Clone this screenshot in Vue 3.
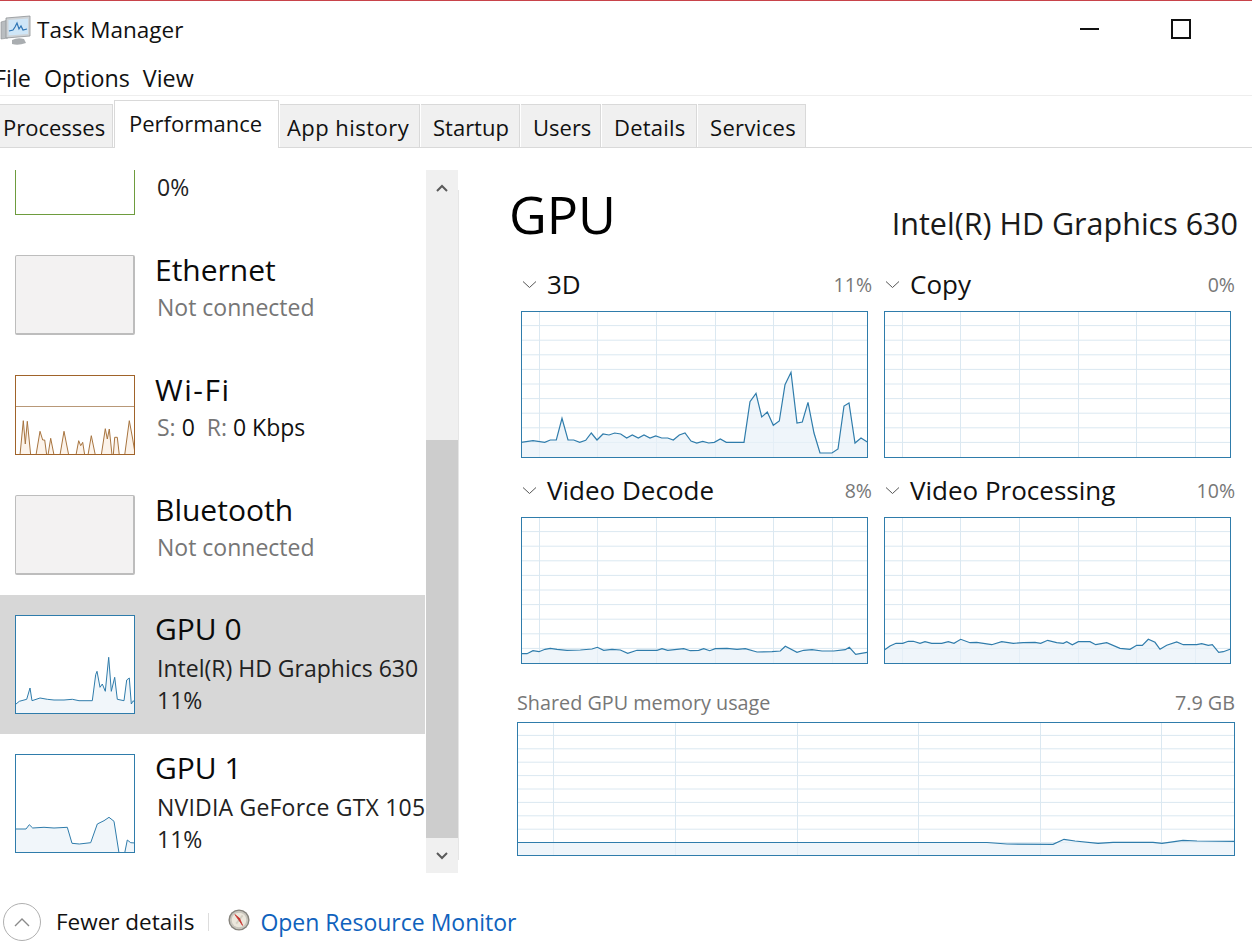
<script setup>
const L = '#2f7cab'
const conv = (pts, ox, oy) => pts.map(([x, y]) => [+((x - ox) / 3).toFixed(1), +((y - oy) / 3).toFixed(1)])
const line = p => p.map(q => q.join(',')).join(' ')
const area = (p, w, h) => `0,${h} ${line(p)} ${w},${h}`

const p3d = conv([[34,533],[70,528],[105,533],[122,526],[140,526],[157,461],[175,526],[192,526],[210,533],[228,527],[245,505],[262,526],[280,508],[298,511],[315,505],[333,508],[351,520],[368,511],[386,520],[403,511],[421,520],[438,514],[456,520],[474,520],[491,526],[509,511],[526,505],[544,529],[561,535],[579,530],[597,535],[614,533],[632,523],[650,533],[703,533],[721,411],[739,386],[756,457],[773,442],[791,482],[809,469],[826,360],[844,323],[862,475],[878,472],[895,413],[913,505],[931,565],[967,565],[985,553],[1003,424],[1018,415],[1036,535],[1054,520],[1073,532]], 34, 139)

const decode = conv([[13,71],[30,71],[48,62],[66,65],[84,58],[100,55],[120,58],[150,61],[190,60],[225,57],[241,52],[260,61],[285,58],[310,60],[332,70],[360,61],[420,61],[435,56],[452,61],[500,56],[520,62],[545,61],[560,56],[578,62],[595,56],[630,55],[660,58],[685,56],[720,66],[765,65],[790,63],[805,49],[840,67],[860,61],[885,59],[915,63],[950,63],[985,59],[997,52],[1016,73],[1050,67]], 12, -339)
const proc = conv([[13,60],[30,48],[48,40],[68,40],[85,34],[100,34],[120,40],[135,35],[155,40],[185,40],[205,35],[222,40],[242,28],[270,38],[290,37],[335,44],[365,35],[400,40],[430,38],[465,37],[482,40],[503,31],[530,38],[550,40],[560,35],[577,44],[595,35],[630,35],[647,44],[680,38],[720,55],[750,58],[770,46],[787,46],[805,28],[825,37],[840,58],[860,46],[890,36],[910,44],[950,44],[965,41],[985,46],[997,44],[1016,67],[1030,65],[1050,58]], 12, -339)
const memory = [[0,120.5],[470,120.5],[490,122],[536,122.3],[547,117.3],[558,119],[581,121.3],[596,120.3],[636,120.3],[645,121.3],[666,118.3],[680,119],[718,119.3]]

const wifi = conv([[46,283],[58,283],[68,180],[74,250],[80,182],[90,283],[106,283],[118,212],[126,238],[132,238],[138,283],[142,283],[150,233],[160,283],[178,283],[190,212],[204,283],[226,283],[234,240],[240,255],[246,245],[252,283],[262,283],[272,225],[284,283],[302,283],[314,204],[320,235],[326,205],[334,283],[338,283],[342,230],[350,230],[356,283],[372,283],[386,180],[396,235],[404,283]], 46, 46)
const gpu0 = conv([[46,310],[56,302],[78,296],[88,262],[94,300],[118,292],[140,296],[160,298],[190,298],[215,296],[235,300],[275,300],[285,222],[289,212],[298,260],[305,250],[314,272],[324,170],[332,272],[342,230],[350,296],[370,300],[378,238],[386,232],[392,310],[398,300],[404,308]], 46, 46)
const gpu1 = conv([[46,685],[76,685],[86,672],[96,682],[130,680],[160,682],[200,680],[214,728],[236,730],[270,726],[290,670],[310,660],[325,650],[340,662],[355,757],[372,757],[380,718],[390,726],[404,727]], 46, 463)

const big = [
  { cls: 'gap-a', name: '3D', value: '11%', trace: p3d },
  { cls: 'gap-a', name: 'Copy', value: '0%', trace: null },
  { cls: 'gap-b', name: 'Video Decode', value: '8%', trace: decode },
  { cls: 'gap-b', name: 'Video Processing', value: '10%', trace: proc }
]
const vLines = [18, 76, 135, 194, 252, 311]
const hLines = [14.6, 29.2, 43.8, 58.4, 73, 87.6, 102.2, 116.8, 131.4]
const mvLines = [36, 158, 280, 401, 523, 644]
const mhLines = [13.4, 26.8, 40.2, 53.6, 67, 80.4, 93.8, 107.2, 120.6]
const tabs = ['Processes', 'Performance', 'App history', 'Startup', 'Users', 'Details', 'Services']
</script>

<template>
  <div class="win">
    <header class="title">
      <svg class="app-icon" viewBox="0 0 32 32" width="32" height="32">
        <path d="M1 8 L8 6 V24 L1 25Z" fill="#b9bdc0" stroke="#8c8f92" stroke-width=".6"/>
        <path d="M6 4 L30 2 V22 L6 24Z" fill="#cfd3d6" stroke="#8e9295" stroke-width=".8"/>
        <path d="M8.500 6 L28 4.500 V20 L8.500 21.500Z" fill="#cfe6f7"/>
        <path d="M9 17 L13 16 L15 13 L17 9 L19 15 L21 12 L23 16 L27 15" fill="none" stroke="#2d74b4" stroke-width="1.200"/>
        <path d="M12 26 Q18 23 24 25 L26 29 Q18 32 12 30Z" fill="#a9adb0"/>
      </svg>
      <span class="title-text">Task Manager</span>
      <div class="controls">
        <span class="min"></span>
        <span class="max"></span>
      </div>
    </header>
    <nav class="menu"><span>File</span><span>Options</span><span>View</span></nav>
    <div class="tabs">
      <div v-for="t in tabs" :key="t" class="tab" :class="[t.split(' ')[0].toLowerCase(), { active: t === 'Performance' }]">{{ t }}</div>
    </div>
    <main class="body">
      <aside class="side">
        <div class="list">
          <div class="item first">
            <div class="thumb green"></div>
            <div class="info"><div class="name">&nbsp;</div><div class="sub dark">0%</div></div>
          </div>
          <div class="item">
            <div class="thumb off"></div>
            <div class="info"><div class="name">Ethernet</div><div class="sub">Not connected</div></div>
          </div>
          <div class="item">
            <div class="thumb wifi">
              <svg width="118" height="78" viewBox="0 0 118 78">
                <line x1="0" y1="30.500" x2="118" y2="30.500" stroke="#b89878"/>
                <polygon :points="area(wifi, 118, 78)" fill="#fcf3ea"/>
                <polyline :points="line(wifi)" fill="none" stroke="#a7743f"/>
              </svg>
            </div>
            <div class="info"><div class="name wide">Wi-Fi</div><div class="sub"><span>S:</span> <b>0</b>&nbsp; <span>R:</span> <b>0 Kbps</b></div></div>
          </div>
          <div class="item">
            <div class="thumb off"></div>
            <div class="info"><div class="name">Bluetooth</div><div class="sub">Not connected</div></div>
          </div>
          <div class="item tall selected">
            <div class="thumb blue">
              <svg width="118" height="97" viewBox="0 0 118 97">
                <polygon :points="area(gpu0, 118, 97)" fill="#f1f6fa"/>
                <polyline :points="line(gpu0)" fill="none" :stroke="L"/>
              </svg>
            </div>
            <div class="info"><div class="name">GPU 0</div><div class="sub dark">Intel(R) HD Graphics 630</div><div class="sub dark pct">11%</div></div>
          </div>
          <div class="item tall">
            <div class="thumb blue">
              <svg width="118" height="97" viewBox="0 0 118 97">
                <polygon :points="area(gpu1, 118, 97)" fill="#f1f6fa"/>
                <polyline :points="line(gpu1)" fill="none" :stroke="L"/>
              </svg>
            </div>
            <div class="info"><div class="name">GPU 1</div><div class="sub dark nv">NVIDIA GeForce GTX 105</div><div class="sub dark pct">11%</div></div>
          </div>
        </div>
        <div class="scroll">
          <div class="arrow">
            <svg width="12" height="8" viewBox="0 0 12 8"><path d="M1 7 L6 2 L11 7" fill="none" stroke="#5a5a5a" stroke-width="2"/></svg>
          </div>
          <div class="track"></div>
          <div class="thumb-bar"></div>
          <div class="arrow down">
            <svg width="12" height="8" viewBox="0 0 12 8"><path d="M1 1 L6 6 L11 1" fill="none" stroke="#5a5a5a" stroke-width="2"/></svg>
          </div>
        </div>
        <div class="rule"></div>
      </aside>
      <section class="detail">
        <div class="head">
          <h1>GPU</h1>
          <div class="model">Intel(R) HD Graphics 630</div>
        </div>
        <div class="grid">
          <div v-for="c in big" :key="c.name" class="cell" :class="c.cls">
            <div class="cell-head">
              <svg class="chev" width="15" height="9" viewBox="0 0 15 9"><path d="M1 1.500 L7.500 7.500 L14 1.500" fill="none" stroke="#555" stroke-width="1"/></svg>
              <span class="cell-name">{{ c.name }}</span>
              <span class="cell-val">{{ c.value }}</span>
            </div>
            <svg class="chart" width="347" height="147" viewBox="0 0 347 147">
              <line v-for="x in vLines" :key="'v' + x" :x1="x + .5" y1="0" :x2="x + .5" y2="147" class="grid-line"/>
              <line v-for="y in hLines" :key="'h' + y" x1="0" :y1="y" x2="347" :y2="y" class="grid-line"/>
              <template v-if="c.trace">
                <polygon :points="area(c.trace, 347, 147)" fill="#e8f1f8" fill-opacity=".7"/>
                <polyline :points="line(c.trace)" fill="none" :stroke="L" stroke-width="1.200"/>
              </template>
              <rect x=".5" y=".5" width="346" height="146" fill="none" :stroke="L"/>
            </svg>
          </div>
        </div>
        <div class="mem-head"><span>Shared GPU memory usage</span><span>7.9 GB</span></div>
        <svg class="mem" width="718" height="134" viewBox="0 0 718 134">
          <line v-for="x in mvLines" :key="'mv' + x" :x1="x + .5" y1="0" :x2="x + .5" y2="134" class="grid-line"/>
          <line v-for="y in mhLines" :key="'mh' + y" x1="0" :y1="y" x2="718" :y2="y" class="grid-line"/>
          <polygon :points="area(memory, 718, 134)" fill="#e8f1f8" fill-opacity=".7"/>
          <polyline :points="line(memory)" fill="none" :stroke="L" stroke-width="1.200"/>
          <rect x=".5" y=".5" width="717" height="133" fill="none" :stroke="L"/>
        </svg>
      </section>
    </main>
    <footer class="foot">
      <span class="circle">
        <svg width="16" height="10" viewBox="0 0 16 10"><path d="M1 9 L8 2 L15 9" fill="none" stroke="#8a8a8a" stroke-width="1.400"/></svg>
      </span>
      <span class="fewer">Fewer details</span>
      <span class="sep"></span>
      <svg class="mon" width="22" height="22" viewBox="0 0 24 24">
        <circle cx="12" cy="12" r="11.500" fill="#86837c"/>
        <circle cx="12" cy="12" r="10" fill="#c9c6bd"/>
        <circle cx="12" cy="12" r="8" fill="#ece7dc"/>
        <path d="M16 7 L9 16" stroke="#d4cfc2" stroke-width="2"/>
        <path d="M7.500 6 L11 11 L16 18 L12.500 10 Z" fill="#c6302b" stroke="#c6302b" stroke-width=".8"/>
      </svg>
      <span class="link">Open Resource Monitor</span>
    </footer>
  </div>
</template>

<style>
html, body { margin: 0; background: #fff; }
</style>

<style scoped>
.win {
  width: 1252px; height: 941px; overflow: hidden; background: #fff; color: #111;
  font-family: "Open Sans", "Noto Sans", sans-serif; border-top: 1px solid #c8434a;
  box-sizing: border-box; display: flex; flex-direction: column;
}
.title { height: 59px; display: flex; align-items: center; flex: none; padding-bottom: 2px; box-sizing: border-box; }
.app-icon { flex: none; margin: 0 6px 0 0; }
.title-text { font-size: 22.500px; margin-left: -1px; }
.controls { margin-left: auto; display: flex; align-items: center; padding-bottom: 2px; }
.min { width: 19px; height: 2px; background: #111; margin-right: 72px; }
.max { width: 16px; height: 16px; border: 2px solid #111; margin-right: 61px; }
.menu { height: 35px; display: flex; gap: 13px; margin-left: -6px; align-items: center; font-size: 23.300px; flex: none; border-bottom: 1px solid #eee; }
.tabs { height: 47px; margin-top: 4px; display: flex; align-items: flex-end; border-bottom: 1px solid #d9d9d9; flex: none; gap: 1px; }
.tab { height: 43px; box-sizing: border-box; background: #f0f0f0; border: 1px solid #d9d9d9; border-bottom: 0; border-left: 0; font-size: 22px; display: flex; align-items: center; padding: 2px 0 0 12px; }
.processes { width: 113px; padding-left: 3px; }
.performance { width: 165px; }
.app { width: 140px; padding-left: 7px; letter-spacing: .45px; }
.startup { width: 99px; }
.users { width: 80px; }
.details { width: 95px; letter-spacing: .2px; }
.services { width: 108px; letter-spacing: .35px; }
.tab.active { height: 48px; background: #fff; border-left: 1px solid #d9d9d9; margin-bottom: -1px; padding: 0 0 4px 14px; position: relative; }
.body { display: flex; flex: none; height: 725px; }
.side { width: 460px; display: flex; flex: none; padding-top: 22px; box-sizing: border-box; position: relative; height: 725px; }
.list { width: 426px; height: 703px; overflow: hidden; flex: none; }
.item { display: flex; height: 120px; padding: 20px 0 0 15px; box-sizing: border-box; }
.item.first { margin-top: -55px; }
.item.tall { height: 139px; }
.item.selected { background: #d7d7d7; width: 425px; }
.thumb { width: 120px; height: 80px; box-sizing: border-box; border: 1px solid; flex: none; background: #fff; }
.tall .thumb { height: 99px; }
.thumb svg { display: block; }
.green { border-color: #6e9c3e; }
.off { background: #f3f2f2; border-color: #bdbdbd; border-width: 1px 2px 2px 1px; border-radius: 2px; }
.wifi { border-color: #a0632a; }
.blue { border-color: #2f7cab; }
.info { margin-left: 20px; white-space: nowrap; }
.name { font-size: 30px; line-height: 30px; color: #0a0a0a; }
.name.wide { letter-spacing: 1.500px; }
.sub { font-size: 23px; line-height: 32px; margin-top: 6px; margin-left: 2px; color: #767676; }
.sub b { font-weight: 400; color: #111; }
.sub.dark { color: #222; }
.sub.nv { letter-spacing: .2px; }
.sub.pct { margin-top: 0; }
.tall .name { margin-top: -1px; }
.tall .sub { margin-top: 8px; }
.tall .sub.pct { margin-top: 0; }
.scroll { width: 32px; height: 703px; background: #f0f0f0; flex: none; display: flex; flex-direction: column; }
.arrow { height: 35px; display: flex; align-items: center; justify-content: center; flex: none; }
.track { height: 235px; flex: none; }
.thumb-bar { height: 398px; background: #cdcdcd; flex: none; }
.rule { width: 1px; height: 670px; background: #e6e6e6; margin-top: 20px; flex: none; }
.detail { width: 718px; margin-left: 57px; flex: none; }
.head { display: flex; align-items: baseline; justify-content: space-between; margin-top: 30px; height: 89px; width: 729px; margin-left: -8px; }
h1 { font-weight: 400; font-size: 52px; margin: 0; line-height: 72px; color: #000; }
.model { font-size: 30.500px; color: #1a1a1a; position: relative; top: 1px; }
.grid { display: grid; grid-template-columns: 347px 347px; column-gap: 16px; margin-left: 4px; }
.cell-head { display: flex; align-items: center; height: 34px; margin-bottom: 10px; }
.chev { margin-left: 1px; margin-right: 10px; flex: none; }
.cell-name { font-size: 26px; }
.cell-val { margin-left: auto; margin-right: -4px; color: #777; font-size: 19.500px; }
.gap-a { height: 206px; }
.chart, .mem { display: block; }
.grid-line { stroke: #dbe8f1; stroke-width: 1; }
.mem-head { display: flex; justify-content: space-between; color: #777; font-size: 19.800px; height: 30px; align-items: center; margin-top: 23px; margin-bottom: 5px; }
.foot { flex: 1; display: flex; align-items: center; margin-top: 29px; }
.circle { width: 36px; height: 36px; border: 1px solid #b0b0b0; border-radius: 50%; margin-left: 3px; display: flex; align-items: center; justify-content: center; flex: none; }
.fewer { margin-left: 15px; font-size: 22.500px; }
.sep { width: 1px; height: 18px; background: #ddd; margin-left: 14px; }
.mon { margin: 0 0 3px 19px; flex: none; }
.link { margin-left: 10px; color: #0f62bd; font-size: 23px; }
</style>
